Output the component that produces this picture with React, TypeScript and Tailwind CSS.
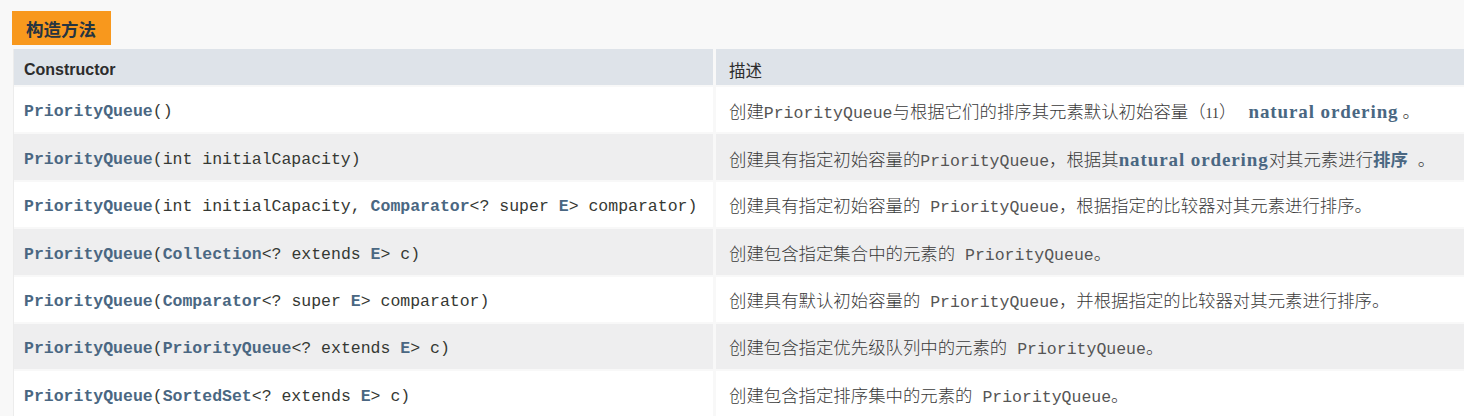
import type { ReactNode } from "react";

const mono = "font-['Liberation_Mono','Noto_Sans_CJK_SC',monospace] text-[16.5px]";
const desc = "font-['Liberation_Serif','Noto_Sans_CJK_SC',serif] text-[17.4px] text-[#3a3a3a] font-light";

// bold link-ish type name
const T = ({ children }: { children: ReactNode }) => (
  <span className="font-bold text-[#4a6782]">{children}</span>
);

const Code = ({ children }: { children: ReactNode }) => (
  <span className={`${mono} font-normal text-[#555555]`}>{children}</span>
);

const NaturalOrdering = ({ className = "" }: { className?: string }) => (
  <span className={`font-['Liberation_Serif',serif] font-bold text-[19px] text-[#4a6782] tracking-[0.9px] ${className}`}>
    natural ordering
  </span>
);

interface Row {
  sig: ReactNode;
  text: ReactNode;
}

const rows: Row[] = [
  {
    sig: (
      <>
        <T>PriorityQueue</T>()
      </>
    ),
    text: (
      <>
        创建<Code>PriorityQueue</Code>与根据它们的排序其元素默认初始容量（
        <span className="text-[14px] font-normal">11</span>）
        <NaturalOrdering className="ml-[12px]" />
        <span className="ml-[4px]">。</span>
      </>
    ),
  },
  {
    sig: (
      <>
        <T>PriorityQueue</T>(int initialCapacity)
      </>
    ),
    text: (
      <>
        创建具有指定初始容量的<Code>PriorityQueue</Code>，根据其<NaturalOrdering />对其元素进行
        <span className="text-[#4a6782] font-bold">排序</span>
        <span className="ml-[10px]">。</span>
      </>
    ),
  },
  {
    sig: (
      <>
        <T>PriorityQueue</T>(int initialCapacity, <T>Comparator</T>&lt;? super <T>E</T>&gt; comparator)
      </>
    ),
    text: (
      <>
        创建具有指定初始容量的<Code> PriorityQueue</Code>，根据指定的比较器对其元素进行排序。
      </>
    ),
  },
  {
    sig: (
      <>
        <T>PriorityQueue</T>(<T>Collection</T>&lt;? extends <T>E</T>&gt; c)
      </>
    ),
    text: (
      <>
        创建包含指定集合中的元素的<Code> PriorityQueue</Code>。
      </>
    ),
  },
  {
    sig: (
      <>
        <T>PriorityQueue</T>(<T>Comparator</T>&lt;? super <T>E</T>&gt; comparator)
      </>
    ),
    text: (
      <>
        创建具有默认初始容量的<Code> PriorityQueue</Code>，并根据指定的比较器对其元素进行排序。
      </>
    ),
  },
  {
    sig: (
      <>
        <T>PriorityQueue</T>(<T>PriorityQueue</T>&lt;? extends <T>E</T>&gt; c)
      </>
    ),
    text: (
      <>
        创建包含指定优先级队列中的元素的<Code> PriorityQueue</Code>。
      </>
    ),
  },
  {
    sig: (
      <>
        <T>PriorityQueue</T>(<T>SortedSet</T>&lt;? extends <T>E</T>&gt; c)
      </>
    ),
    text: (
      <>
        创建包含指定排序集中的元素的<Code> PriorityQueue</Code>。
      </>
    ),
  },
];

export default function App() {
  return (
    <div className="w-[1464px] h-[416px] overflow-hidden bg-[#f8f8f8] pt-[11px]">
      {/* caption tab */}
      <div className="ml-[12px] w-[99px] h-[34px] bg-[#f8981d] flex items-center pl-[14px] pt-[2px] font-['Noto_Sans_CJK_SC',sans-serif] font-bold text-[17.5px] text-[#253441] leading-none">
        构造方法
      </div>

      <div className="ml-[13px] mt-[4px] border-l border-[#ececec] grid grid-cols-[699px_1fr] gap-x-[3px] gap-y-[2px] auto-rows-[45.4px] grid-rows-[36px]">
        <div className="bg-[#dee3e9] flex items-center pl-[10px] pt-[6px] leading-none font-['Liberation_Sans',sans-serif] font-bold text-[16px] text-[#2c2c2c]">
          Constructor
        </div>
        <div className="bg-[#dee3e9] flex items-center pl-[13px] pt-[6px] leading-none font-['Noto_Sans_CJK_SC',sans-serif] text-[16.5px] text-[#2c2c2c]">
          描述
        </div>

        {rows.map((row, i) => {
          const bg = i % 2 === 0 ? "bg-white" : "bg-[#eeeeef]";
          return (
            <div key={i} className="contents">
              <div className={`${bg} flex items-center pl-[10px] pt-[6px] whitespace-nowrap leading-none ${mono} text-[#353833]`}>
                <span>{row.sig}</span>
              </div>
              <div className={`${bg} flex items-center pl-[13px] pt-[6px] whitespace-nowrap leading-none ${desc}`}>
                <span>{row.text}</span>
              </div>
            </div>
          );
        })}
      </div>
    </div>
  );
}
